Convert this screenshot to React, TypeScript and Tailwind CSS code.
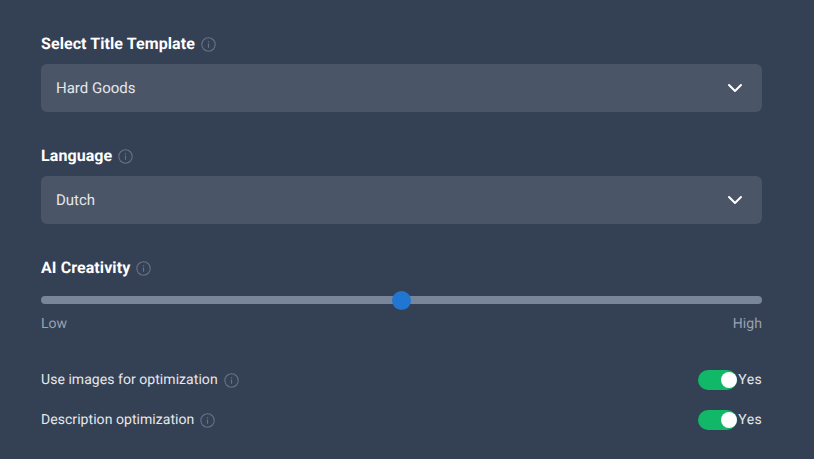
import React from 'react'
import { ChevronDown } from 'lucide-react'

function InfoIcon() {
  return (
    <svg width="15" height="15" viewBox="0 0 15 15" fill="none" className="shrink-0 text-[#667085]">
      <circle cx="7.5" cy="7.5" r="6.7" stroke="currentColor" strokeWidth="1.1" />
      <rect x="6.9" y="6.4" width="1.2" height="4.4" fill="currentColor" />
      <rect x="6.9" y="4.1" width="1.2" height="1.2" fill="currentColor" />
    </svg>
  )
}

function Label({ children }: { children: React.ReactNode }) {
  return (
    <div className="flex items-center gap-[6px] h-5">
      <span className="mt-[2px] text-base font-bold text-white leading-5 tracking-[0.08px]">{children}</span>
      <div className="mt-[2px]">
        <InfoIcon />
      </div>
    </div>
  )
}

function SelectBox({ value }: { value: string }) {
  return (
    <div className="mt-[11px] h-12 rounded-md bg-[#4a5568] flex items-center justify-between px-[15px]">
      <span className="text-[15px] text-[#e5e7eb]">{value}</span>
      <ChevronDown className="w-6 h-6 text-white" strokeWidth={2} />
    </div>
  )
}

function ToggleRow({ label }: { label: string }) {
  return (
    <div className="flex items-center justify-between h-5">
      <div className="flex items-center gap-[6px]">
        <span className="text-sm tracking-[0.05px] text-[#e5e7eb]">{label}</span>
        <InfoIcon />
      </div>
      <div className="flex items-center gap-[1px]">
        <div className="relative w-[39px] h-5 rounded-full bg-[#10b867]">
          <div className="absolute right-0 top-[2px] w-4 h-4 rounded-full bg-white" />
        </div>
        <span className="text-sm tracking-[0.35px] text-[#e5e7eb]">Yes</span>
      </div>
    </div>
  )
}

export default function App() {
  return (
    <div className="w-[814px] h-[459px] overflow-hidden bg-[#344054] pl-[41px] pr-[52px] pt-[33px] font-['Roboto',sans-serif] [text-rendering:geometricPrecision]">
      <Label>Select Title Template</Label>
      <SelectBox value="Hard Goods" />

      <div className="mt-[33px]">
        <Label>Language</Label>
        <SelectBox value="Dutch" />
      </div>

      <div className="mt-[33px]">
        <Label>AI Creativity</Label>
        <div className="relative mt-[19px] h-2 rounded-full bg-[#79869a]">
          <div className="absolute left-[351px] top-[-5.5px] w-[19px] h-[19px] rounded-full bg-[#2176d2]" />
        </div>
        <div className="mt-[10px] flex justify-between text-sm tracking-[0.05px] text-[#98a2b3]">
          <span>Low</span>
          <span>High</span>
        </div>
      </div>

      <div className="mt-[36px] flex flex-col gap-5">
        <ToggleRow label="Use images for optimization" />
        <ToggleRow label="Description optimization" />
      </div>
    </div>
  )
}
